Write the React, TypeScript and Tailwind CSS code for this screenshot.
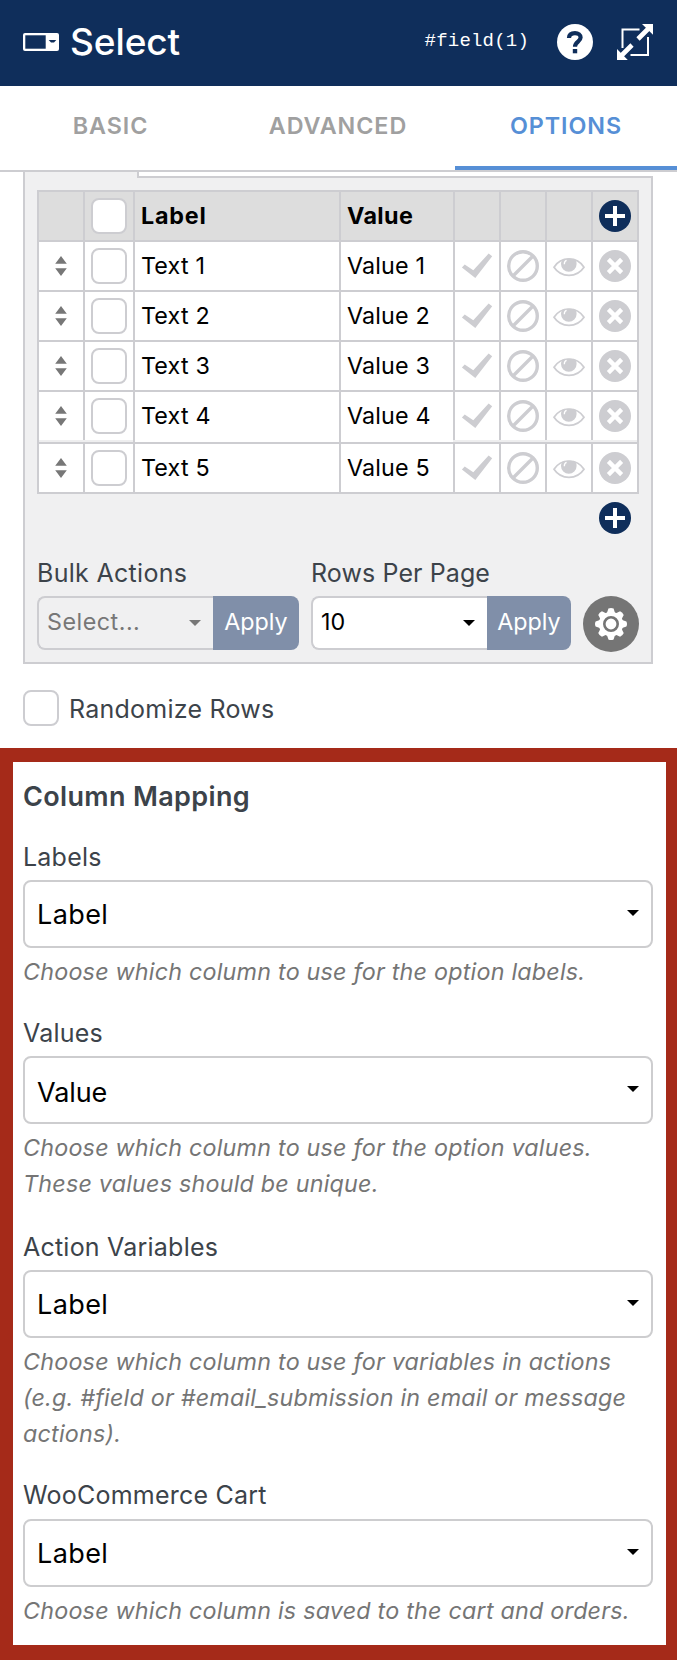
import { useState } from "react"

const rows = [1, 2, 3, 4, 5]

const fields = [
  {
    label: "Labels",
    value: "Label",
    help: ["Choose which column to use for the option labels."],
    wrap: "mt-[22px]",
    box: "mt-[5px]",
    text: "tracking-[0.4px]",
  },
  {
    label: "Values",
    value: "Value",
    help: ["Choose which column to use for the option values.", "These values should be unique."],
    wrap: "mt-[25px]",
    box: "mt-[5px]",
    text: "tracking-[-0.1px] pt-1",
  },
  {
    label: "Action Variables",
    value: "Label",
    help: [
      "Choose which column to use for variables in actions",
      "(e.g. #field or #email_submission in email or message",
      "actions).",
    ],
    wrap: "mt-[27px]",
    box: "mt-[5px]",
    text: "tracking-[0.4px]",
  },
  {
    label: "WooCommerce Cart",
    value: "Label",
    help: ["Choose which column is saved to the cart and orders."],
    wrap: "mt-[25px]",
    box: "mt-[6px]",
    text: "tracking-[0.4px]",
  },
]

function SelectIcon() {
  return (
    <svg width="36" height="18" viewBox="0 0 36 18">
      <rect width="36" height="18" rx="2" fill="#fff" />
      <rect x="2.3" y="2.3" width="20.4" height="13.4" fill="#0f2e5b" />
      <path d="M25.7 7h7.6l-2.3 2.4h-3z" fill="#0f2e5b" />
    </svg>
  )
}

function HelpIcon() {
  return (
    <svg width="36" height="36" viewBox="0 0 36 36" fill="none">
      <circle cx="18" cy="18" r="18" fill="#fff" />
      <path
        d="M12 14C12.1 10.8 14.5 9.1 18 9.1C21.4 9.1 23.6 10.9 23.6 13.6C23.6 17.6 18 17.6 18 22.7"
        stroke="#0f2e5b"
        strokeWidth="4.2"
      />
      <rect x="15.8" y="25" width="4.4" height="4.3" fill="#0f2e5b" />
    </svg>
  )
}

function ExpandIcon() {
  return (
    <svg width="36" height="36" viewBox="0 0 36 36" fill="none" stroke="#fff">
      <path d="M5.5 24V5.5H22.5M31 13V31H13.5" strokeWidth="2" />
      <path d="M31.5 4.5L21 15M4.5 31.5L15 21" strokeWidth="4.6" />
      <path d="M25 0H36V10.8ZM0 25V36H10.8Z" fill="#fff" stroke="none" />
    </svg>
  )
}

function PlusIcon() {
  return (
    <svg width="32" height="32" viewBox="0 0 32 32">
      <circle cx="16" cy="16" r="16" fill="#0f2e5b" />
      <path d="M16 6v20M6 16h20" stroke="#fff" strokeWidth="4" />
    </svg>
  )
}

function SortIcon() {
  return (
    <svg width="12" height="20" viewBox="0 0 12 20" fill="#777">
      <path d="M6 0l5.8 7.8H.2zM6 20l5.8-7.8H.2z" />
    </svg>
  )
}

function CheckIcon() {
  return (
    <svg width="32" height="32" viewBox="0 0 32 32" fill="#cdcdd1">
      <path d="M.9 17.4L3.7 14.6L12.3 20.2L27.6 3.6L31.2 6.2L14.3 28Z" />
    </svg>
  )
}

function BanIcon() {
  return (
    <svg width="32" height="32" viewBox="0 0 32 32" fill="none" stroke="#cdcdd1">
      <circle cx="16" cy="16" r="14.3" strokeWidth="3.4" />
      <path d="M6 26L26 6" strokeWidth="3.4" />
    </svg>
  )
}

function EyeIcon() {
  return (
    <svg width="32" height="32" viewBox="0 0 32 32" fill="none">
      <path d="M1 17.3C8 6.2 24 6.2 31 17.3C24 28 8 28 1 17.3Z" stroke="#cdcdd1" strokeWidth="1.7" />
      <path d="M9.8 9.6C13 8.6 19 8.6 22.2 9.6C23.4 11 23.6 12.6 23.6 14A7.8 7.8 0 0 1 8 14C8 12.6 8.6 11 9.8 9.6Z" fill="#cdcdd1" />
      <path d="M11.3 14.2C11.3 12 12.2 10.8 13.6 10.4" stroke="#fff" strokeWidth="1.3" />
    </svg>
  )
}

function RemoveIcon() {
  return (
    <svg width="32" height="32" viewBox="0 0 32 32">
      <circle cx="16" cy="16" r="16" fill="#cdcdd1" />
      <path d="M9.4 9.4l13.2 13.2M22.6 9.4L9.4 22.6" stroke="#fff" strokeWidth="4.4" />
    </svg>
  )
}

function GearIcon() {
  return (
    <svg width="32" height="32" viewBox="-16 -16 32 32">
      <circle r="12.2" fill="#fff" />
      {[0, 45, 90, 135, 180, 225, 270, 315].map((a) => (
        <path key={a} d="M-4.2 -10.5L-2.6 -15.4Q0 -16.6 2.6 -15.4L4.2 -10.5Z" fill="#fff" transform={`rotate(${a})`} />
      ))}
      <circle r="6.7" fill="none" stroke="#757575" strokeWidth="2.6" />
    </svg>
  )
}

function Caret({ color }: { color: string }) {
  return (
    <svg width="12" height="6" viewBox="0 0 12 6" fill={color}>
      <path d="M0 0h12L6 6z" />
    </svg>
  )
}

function Checkbox() {
  return <div className="h-9 w-9 rounded-lg border-2 border-[#cdcdd1] bg-white" />
}

const cell = "flex shrink-0 items-center border-l-2 border-[#cdcdd1]"

function OptionsTable() {
  return (
    <div className="w-[602px] border-r-2 border-b-2 border-[#cdcdd1] text-[23.3px] text-black">
      <div className="flex h-[50px] border-t-2 border-[#cdcdd1] bg-[#ddd] font-bold">
        <div className={`${cell} w-[46px]`} />
        <div className={`${cell} w-[50px] justify-center`}>
          <Checkbox />
        </div>
        <div className={`${cell} w-[206px] pl-1.5 tracking-[0.8px]`}>Label</div>
        <div className={`${cell} w-[114px] pl-1.5 tracking-[0.4px]`}>Value</div>
        <div className={`${cell} w-[46px]`} />
        <div className={`${cell} w-[46px]`} />
        <div className={`${cell} w-[46px]`} />
        <div className={`${cell} w-[46px] justify-center`}>
          <PlusIcon />
        </div>
      </div>

      {rows.map((n) => (
        <div key={n}>
          <div className="flex h-[50px] border-t-2 border-[#cdcdd1] bg-white tracking-[0.15px]">
            <div className={`${cell} w-[46px] justify-center`}>
              <SortIcon />
            </div>
            <div className={`${cell} w-[50px] justify-center`}>
              <Checkbox />
            </div>
            <div className={`${cell} w-[206px] pl-1.5`}>Text {n}</div>
            <div className={`${cell} w-[114px] pl-1.5`}>Value {n}</div>
            <div className={`${cell} w-[46px] justify-center`}>
              <CheckIcon />
            </div>
            <div className={`${cell} w-[46px] justify-center`}>
              <BanIcon />
            </div>
            <div className={`${cell} w-[46px] justify-center`}>
              <EyeIcon />
            </div>
            <div className={`${cell} w-[46px] justify-center`}>
              <RemoveIcon />
            </div>
          </div>
          {/* thin gap above the last row */}
          {n === 4 && (
            <div className="flex h-0.5 bg-[#eeeeef]">
              <div className="w-[96px] border-l-2 border-[#cdcdd1]" />
              <div className="w-[206px] border-l-2 border-[#cdcdd1] bg-white" />
              <div className="w-[114px] border-l-2 border-[#cdcdd1] bg-white" />
            </div>
          )}
        </div>
      ))}
    </div>
  )
}

function BulkSelect({ title, value, active }: { title: string; value: string; active?: boolean }) {
  return (
    <div>
      <div className={`text-[25px] leading-9 text-[#3c434a] ${active ? "tracking-[0.1px]" : "tracking-[0.3px]"}`}>
        {title}
      </div>
      <div className="mt-[5px] flex h-[54px] text-[23.3px]">
        <div
          className={`flex w-[176px] items-center justify-between rounded-l-lg border-2 border-r-0 border-[#cdcdd1] pr-3 pl-2 pb-px ${
            active ? "bg-white text-black" : "text-[#777] tracking-[0.5px]"
          }`}
        >
          <span>{value}</span>
          <Caret color={active ? "#000" : "#777"} />
        </div>
        <button
          className={`rounded-r-lg bg-[#808fa9] pb-px text-white ${active ? "w-[84px]" : "w-[86px]"}`}
        >
          Apply
        </button>
      </div>
    </div>
  )
}

export default function App() {
  const [tab, setTab] = useState("OPTIONS")

  const tabClass = (name: string) =>
    tab === name ? "border-[#568fd6] text-[#568fd6]" : "border-transparent text-[#a0a0a0]"

  return (
    <div className="h-[1660px] w-[677px] overflow-hidden bg-white font-['Inter','Liberation_Sans',sans-serif]">
      <header className="flex h-[86px] items-center bg-[#0f2e5b] pr-6 pl-[23px] text-white">
        <div className="mb-0.5">
          <SelectIcon />
        </div>
        <h1 className="mb-[3px] ml-[11px] text-[37px] leading-none font-medium tracking-[-0.1px]">Select</h1>
        <span className="mr-7 mb-1 ml-auto font-['Liberation_Mono',monospace] text-[19px] tracking-[0.2px]">
          #field(1)
        </span>
        <div className="mb-0.5 flex gap-6">
          <HelpIcon />
          <ExpandIcon />
        </div>
      </header>

      <nav className="flex h-[86px] border-b-2 border-[#cdcdd1] text-[23.3px] font-semibold tracking-[0.95px]">
        <button className={`w-[221px] border-b-4 ${tabClass("BASIC")}`} onClick={() => setTab("BASIC")}>
          BASIC
        </button>
        <button className={`w-[234px] border-b-4 ${tabClass("ADVANCED")}`} onClick={() => setTab("ADVANCED")}>
          ADVANCED
        </button>
        <button className={`w-[222px] border-b-4 ${tabClass("OPTIONS")}`} onClick={() => setTab("OPTIONS")}>
          OPTIONS
        </button>
      </nav>

      <section className="mx-[23px] w-[630px]">
        <div className="flex h-1.5">
          <div className="w-[114px] border-l-2 border-[#cdcdd1] bg-[#f0f0f1]" />
          <div className="flex-1 border-b-2 border-l-2 border-[#cdcdd1]" />
        </div>
        <div className="h-[486px] border-x-2 border-b-2 border-[#cdcdd1] bg-[#f0f0f1] px-3 pt-3">
          <OptionsTable />
          <div className="mt-2 flex justify-end pr-2">
            <PlusIcon />
          </div>
          <div className="mt-[21px] flex items-end gap-3">
            <BulkSelect title="Bulk Actions" value="Select..." />
            <BulkSelect title="Rows Per Page" value="10" active />
            <button className="-mb-0.5 flex h-14 w-14 items-center justify-center rounded-full bg-[#757575]">
              <GearIcon />
            </button>
          </div>
        </div>
      </section>

      <div className="mt-[26px] ml-[23px] flex h-9 items-center gap-2.5 text-[25px] tracking-[0.25px] text-[#3c434a]">
        <Checkbox />
        <span className="pt-[3px]">Randomize Rows</span>
      </div>

      <section className="mt-[22px] h-[912px] border-t-[14px] border-r-[11px] border-b-[15px] border-l-[13px] border-[#a52a19] pt-[15px] pr-[13px] pl-[10px]">
        <h2 className="text-[27px] leading-10 font-semibold tracking-[0.35px] text-[#3c434a]">Column Mapping</h2>
        {fields.map((f) => (
          <div key={f.label} className={f.wrap}>
            <div className="text-[25px] leading-9 tracking-[0.22px] text-[#3c434a]">{f.label}</div>
            <div
              className={`${f.box} flex h-[68px] items-center justify-between rounded-lg border-2 border-[#cdcdcf] pr-3 pl-[12px] text-black`}
            >
              <span className={`text-[27px] leading-none ${f.text}`}>{f.value}</span>
              <span className="mb-0.5">
                <Caret color="#000" />
              </span>
            </div>
            <div className="mt-[6px] text-[23.3px] leading-9 tracking-[0.22px] whitespace-nowrap text-[#757575] italic">
              {f.help.map((line) => (
                <p key={line}>{line}</p>
              ))}
            </div>
          </div>
        ))}
      </section>
    </div>
  )
}
